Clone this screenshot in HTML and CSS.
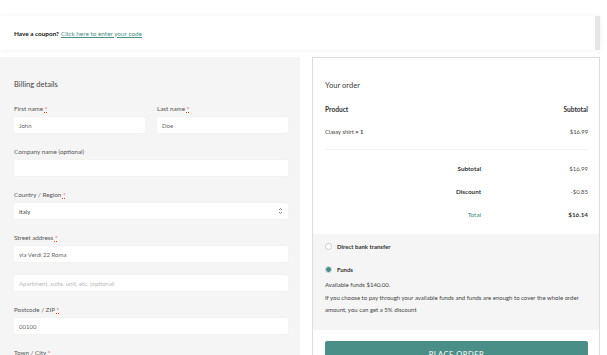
FILE: index.html
```html
<!DOCTYPE html>
<html>

<head>
    <meta charset="utf-8">
    <meta name="viewport" content="width=device-width, initial-scale=1.0">
    <title>Checkout</title>
    <link rel="stylesheet" href="styles.css">
</head>

<body>
    <div class="page">
        <div class="coupon">
            <span class="coupon-q">Have a coupon?</span> <a href="#" class="link">Click here to enter your code</a>
        </div>

        <div class="checkout">
            <div class="billing">
                <h3 class="heading">Billing details</h3>

                <div class="row">
                    <div class="field">
                        <label>First name <abbr class="req">*</abbr></label>
                        <input class="textbox" value="John">
                    </div>
                    <div class="field">
                        <label>Last name <abbr class="req">*</abbr></label>
                        <input class="textbox" value="Doe">
                    </div>
                </div>

                <div class="field">
                    <label>Company name (optional)</label>
                    <input class="textbox">
                </div>

                <div class="field">
                    <label>Country / Region <abbr class="req">*</abbr></label>
                    <div class="textbox select">
                        <span>Italy</span>
                        <svg width="5" height="8" viewBox="0 0 5 8">
                            <path d="M1 3 L2.5 1.5 L4 3 M1 5 L2.5 6.5 L4 5" fill="none" stroke="#666" stroke-width="0.8"/>
                        </svg>
                    </div>
                </div>

                <div class="field">
                    <label>Street address <abbr class="req">*</abbr></label>
                    <input class="textbox" value="via Verdi 22 Roma">
                    <input class="textbox second" placeholder="Apartment, suite, unit, etc. (optional)">
                </div>

                <div class="field">
                    <label>Postcode / ZIP <abbr class="req">*</abbr></label>
                    <input class="textbox" value="00100">
                </div>

                <div class="field">
                    <label>Town / City <abbr class="req">*</abbr></label>
                    <input class="textbox" value="Roma">
                </div>
            </div>

            <div class="order">
                <div class="order-inner">
                    <h3 class="heading">Your order</h3>
                    <div class="line head">
                        <span>Product</span>
                        <span>Subtotal</span>
                    </div>
                    <div class="line item">
                        <span>Classy shirt <b class="qty">&times;&nbsp;1</b></span>
                        <span>$16.99</span>
                    </div>
                    <div class="totals">
                        <div class="t-row">
                            <span class="t-label">Subtotal</span>
                            <span class="t-value">$16.99</span>
                        </div>
                        <div class="t-row">
                            <span class="t-label">Discount</span>
                            <span class="t-value">-$0.85</span>
                        </div>
                        <div class="t-row total">
                            <span class="t-label">Total</span>
                            <span class="t-value">$16.14</span>
                        </div>
                    </div>
                </div>

                <div class="payment">
                    <div class="method">
                        <span class="radio"></span>
                        <span>Direct bank transfer</span>
                    </div>
                    <div class="method">
                        <span class="radio checked"></span>
                        <span>Funds</span>
                    </div>
                    <p class="desc">Available funds $140.00.<br>If you choose to pay through your available funds and funds are enough to cover the whole order amount, you can get a 5% discount</p>
                </div>

                <div class="order-inner">
                    <button class="button">PLACE ORDER</button>
                </div>
            </div>
        </div>
    </div>
</body>

</html>
```

FILE: styles.css
```css
html, body {
    font-family: Lato, "Noto Sans", sans-serif;
    font-size: 7px;
    color: #333;
}

body {
    margin: 0;
    padding: 0;
    overflow: hidden;
}

.page {
    padding-top: 16px;
}

.coupon {
    width: 581px;
    height: 34px;
    padding-left: 14px;
    display: flex;
    align-items: center;
    background: #fff;
    border-right: 5px solid #e6e6e6;
    box-shadow: 0 0 6px rgba(0, 0, 0, 0.06);
    font-size: 6.4px;
}

.coupon-q {
    font-weight: 700;
    color: #111;
    margin-right: 2px;
}

.link {
    color: #4a8f87;
}

.checkout {
    display: flex;
    gap: 12px;
    margin-top: 7px;
}

.billing {
    width: 274px;
    padding: 21px 12px 0 14px;
    background: #f5f5f5;
    height: 300px;
}

.heading {
    margin: 0;
    font-size: 7.6px;
    font-weight: 400;
    line-height: 12px;
    color: #444;
}

.billing .heading {
    margin-bottom: 14px;
}

.row {
    display: flex;
    gap: 12px;
}

.row .field {
    flex: 1;
}

.field {
    display: flex;
    flex-direction: column;
    margin-bottom: 14px;
}

.field label {
    line-height: 10px;
    margin-bottom: 3px;
    font-size: 6.3px;
    color: #555;
}

.req {
    color: #e2401c;
    text-decoration: underline dotted;
}

.textbox {
    box-sizing: border-box;
    height: 16px;
    border: none;
    border-radius: 2px;
    padding: 0 5px;
    background: #fff;
    font-family: Lato, "Noto Sans", sans-serif;
    font-size: 6px;
    color: #666;
    box-shadow: 0 0 2px rgba(0, 0, 0, 0.04);
}

.textbox::placeholder {
    color: #bbb;
}

.textbox.second {
    margin-top: 13px;
}

.select {
    display: flex;
    align-items: center;
    justify-content: space-between;
    color: #444;
}

.order {
    width: 286px;
    border: 1px solid #ddd;
    height: 310px;
}

.order-inner {
    padding: 0 11px 0 12px;
}

.order .heading {
    margin-top: 21px;
    margin-bottom: 12px;
}

.line {
    display: flex;
    justify-content: space-between;
    line-height: 12px;
}

.head {
    font-weight: 700;
    font-size: 6.6px;
    color: #333;
    margin-bottom: 11px;
}

.item {
    font-size: 5.8px;
    color: #444;
    padding-bottom: 11px;
    border-bottom: 1px solid #f3f3f3;
}

.qty {
    font-weight: 700;
}

.totals {
    padding: 7px 0 8px;
}

.t-row {
    display: flex;
    line-height: 12px;
    height: 23px;
    align-items: center;
    font-size: 6px;
}

.t-label {
    width: 156px;
    text-align: right;
    font-weight: 700;
    font-size: 6.3px;
    color: #333;
}

.t-value {
    flex: 1;
    text-align: right;
    color: #555;
}

.total .t-label {
    color: #3f8a82;
    font-weight: 400;
}

.total .t-value {
    font-weight: 700;
    font-size: 6.3px;
    color: #333;
}

.payment {
    background: #f5f5f5;
    padding: 1px 12px 13px 12px;
    font-size: 6px;
    color: #333;
}

.method {
    display: flex;
    align-items: center;
    gap: 5px;
    height: 23px;
    font-weight: 700;
}

.radio {
    box-sizing: border-box;
    width: 7px;
    height: 7px;
    border-radius: 50%;
    border: 1px solid #ccc;
    background: #fff;
}

.radio.checked {
    border: 1.5px solid #cfe2df;
    background: #4a8f87;
}

.desc {
    margin: -2px 0 0;
    line-height: 12.5px;
    color: #444;
}

.button {
    margin-top: 11px;
    width: 100%;
    height: 28px;
    border: none;
    border-radius: 2px;
    background: #4a8f87;
    color: #fff;
    font-family: Lato, "Noto Sans", sans-serif;
    font-size: 7.5px;
    letter-spacing: 0.5px;
}
```
